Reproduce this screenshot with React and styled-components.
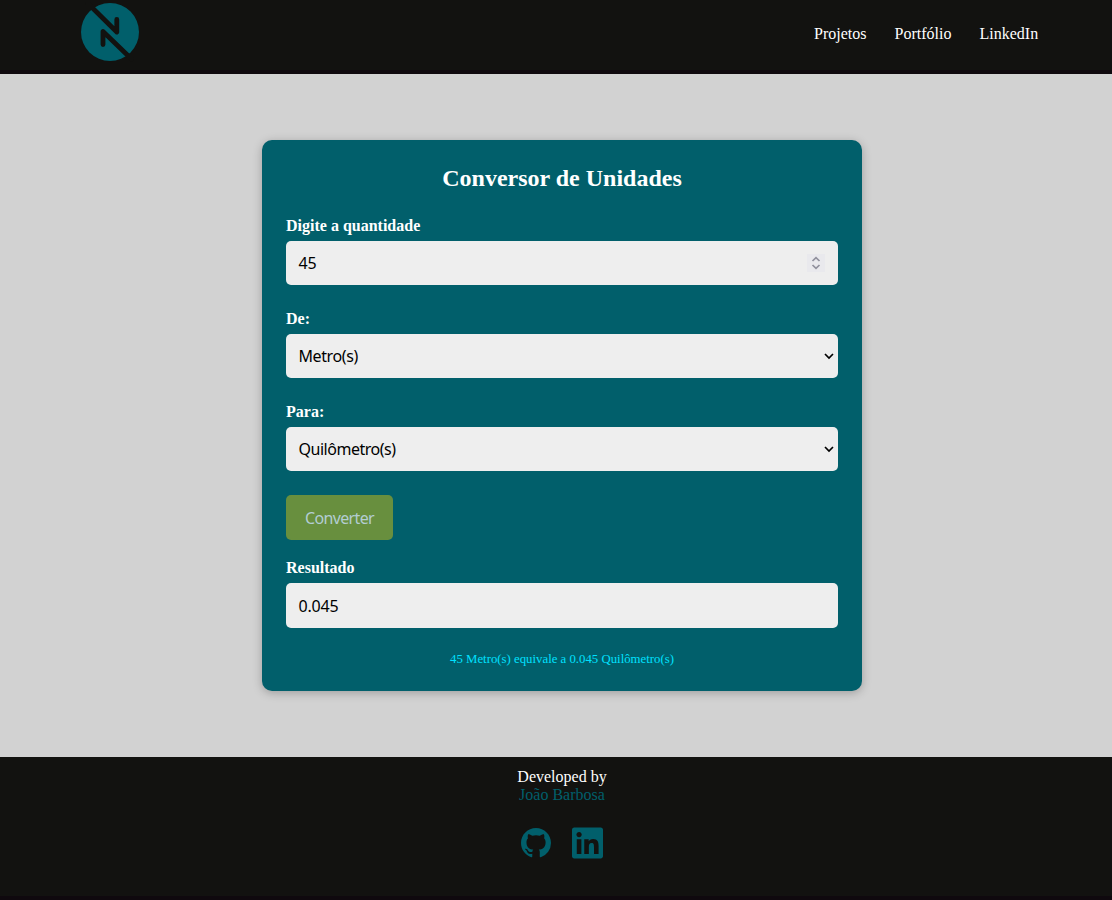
import React from "react";
import styled, { createGlobalStyle } from "styled-components";
import { BsGithub } from "react-icons/bs";
import { FaLinkedin } from "react-icons/fa";

const Global = createGlobalStyle`
  * { box-sizing: border-box; }
  body { margin: 0; background: #d2d2d2; font-family: "Liberation Serif", "Times New Roman", serif; font-size: 16px; line-height: 18px; }
  h1, p { margin: 0; }
  a { color: inherit; text-decoration: none; }
`;
const Page = styled.div`
  height: 900px;
  display: flex;
  flex-direction: column;
`;
const Header = styled.header`
  height: 74px;
  flex: none;
  display: flex;
  justify-content: space-between;
  padding: 2px 72px 0 80px;
  background: #121210;
  border-bottom: 4px solid #0f090e;
`;
const Nav = styled.nav`
  display: flex;
  gap: 27px;
  padding-top: 23px;
  color: #fff;
`;
const NavLink = styled.a`
  width: ${(p) => p.$width}px;
  white-space: nowrap;
`;
const Main = styled.main`
  flex: 1;
  display: flex;
  justify-content: center;
  align-items: center;
  padding-left: 12px;
`;
const Card = styled.form`
  width: 600px;
  height: 551px;
  padding: 24px;
  border-radius: 10px;
  background: #015f6b;
  box-shadow: 0 2px 10px rgba(0, 0, 0, 0.25);
  color: #fff;
`;
const Title = styled.h1`
  font-size: 24px;
  line-height: 28px;
  text-align: center;
  margin-bottom: 25px;
`;
const Field = styled.div`
  margin-bottom: ${(p) => p.$gap ?? 25}px;
`;
const Label = styled.label`
  display: block;
  font-weight: 700;
  line-height: 18px;
  margin-bottom: 6px;
`;
const Control = styled.div`
  display: flex;
  align-items: center;
  justify-content: space-between;
  height: ${(p) => p.$height || 44}px;
  padding: 0 ${(p) => p.$right || 4}px 0 12.5px;
  border-radius: 5px;
  background: #eee;
  color: #000;
  font: 16px "Noto Sans", sans-serif;
  letter-spacing: ${(p) => p.$track || 0}px;
`;
const Spinner = styled.span`
  display: flex;
  width: 18px;
  height: 18px;
  background: #e9e9ed;
`;
const Button = styled.button`
  display: block;
  width: 107px;
  height: 45px;
  margin-bottom: 19px;
  padding: 0;
  border: 0;
  border-radius: 5px;
  background: #688f3e;
  color: #b3cdd2;
  font: 16px "Noto Sans", sans-serif;
  letter-spacing: -0.65px;
`;
const Summary = styled.p`
  font-size: 12.8px;
  line-height: 14px;
  text-align: center;
  color: #00e1ff;
`;
const Footer = styled.footer`
  height: 143px;
  flex: none;
  padding: 11px 0 0 12px;
  background: #121210;
  border-bottom: 4px solid #0f090e;
  color: #fff;
  text-align: center;
`;
const Author = styled.p`
  color: #015f6b;
`;
const Social = styled.div`
  display: flex;
  justify-content: center;
  align-items: center;
  gap: 21px;
  margin-top: 21px;
  color: #015f6b;

  svg:last-child {
    height: 36px;
  }
`;

const Logo = () => (
  <svg width="60" height="60" viewBox="0 0 60 60">
    <circle cx="30" cy="30" r="29" fill="#015f6b" />
    <g fill="none" stroke="#121210" strokeWidth="4.8" strokeLinecap="round" strokeLinejoin="round">
      <path d="M7.5 1 36.8 30V17.5" />
      <path d="M51.5 57 23 29.5V42.5" />
    </g>
  </svg>
);
const Chevron = () => (
  <svg width="10" height="8" viewBox="0 0 10 8" fill="none" stroke="#000" strokeWidth="1.7">
    <path d="m1 2 4 4 4-4" />
  </svg>
);

export default function App() {
  return (
    <Page>
      <Global />
      <Header>
        <Logo />
        <Nav>
          <NavLink href="#" $width={53.5}>Projetos</NavLink>
          <NavLink href="#" $width={58}>Portfólio</NavLink>
          <NavLink href="#" $width={60.5}>LinkedIn</NavLink>
        </Nav>
      </Header>
      <Main>
        <Card>
          <Title>Conversor de Unidades</Title>
          <Field>
            <Label>Digite a quantidade</Label>
            <Control $right={13} $track={-0.2}>
              45
              <Spinner>
                <svg width="18" height="18" fill="none" stroke="#91919d" strokeWidth="1.7">
                  <path d="m5.5 7 3.5-3.4L12.5 7M5.5 11 9 14.4 12.5 11" />
                </svg>
              </Spinner>
            </Control>
          </Field>
          <Field>
            <Label>De:</Label>
            <Control $track={-0.4}>Metro(s)<Chevron /></Control>
          </Field>
          <Field $gap={24}>
            <Label>Para:</Label>
            <Control $track={-0.48}>Quilômetro(s)<Chevron /></Control>
          </Field>
          <Button type="button">Converter</Button>
          <Field $gap={24}>
            <Label>Resultado</Label>
            <Control $height={45} $track={-0.2}>0.045</Control>
          </Field>
          <Summary>45 Metro(s) equivale a 0.045 Quilômetro(s)</Summary>
        </Card>
      </Main>
      <Footer>
        <p>Developed by</p>
        <Author>João Barbosa</Author>
        <Social>
          <BsGithub size={30} />
          <FaLinkedin size={31} />
        </Social>
      </Footer>
    </Page>
  );
}
